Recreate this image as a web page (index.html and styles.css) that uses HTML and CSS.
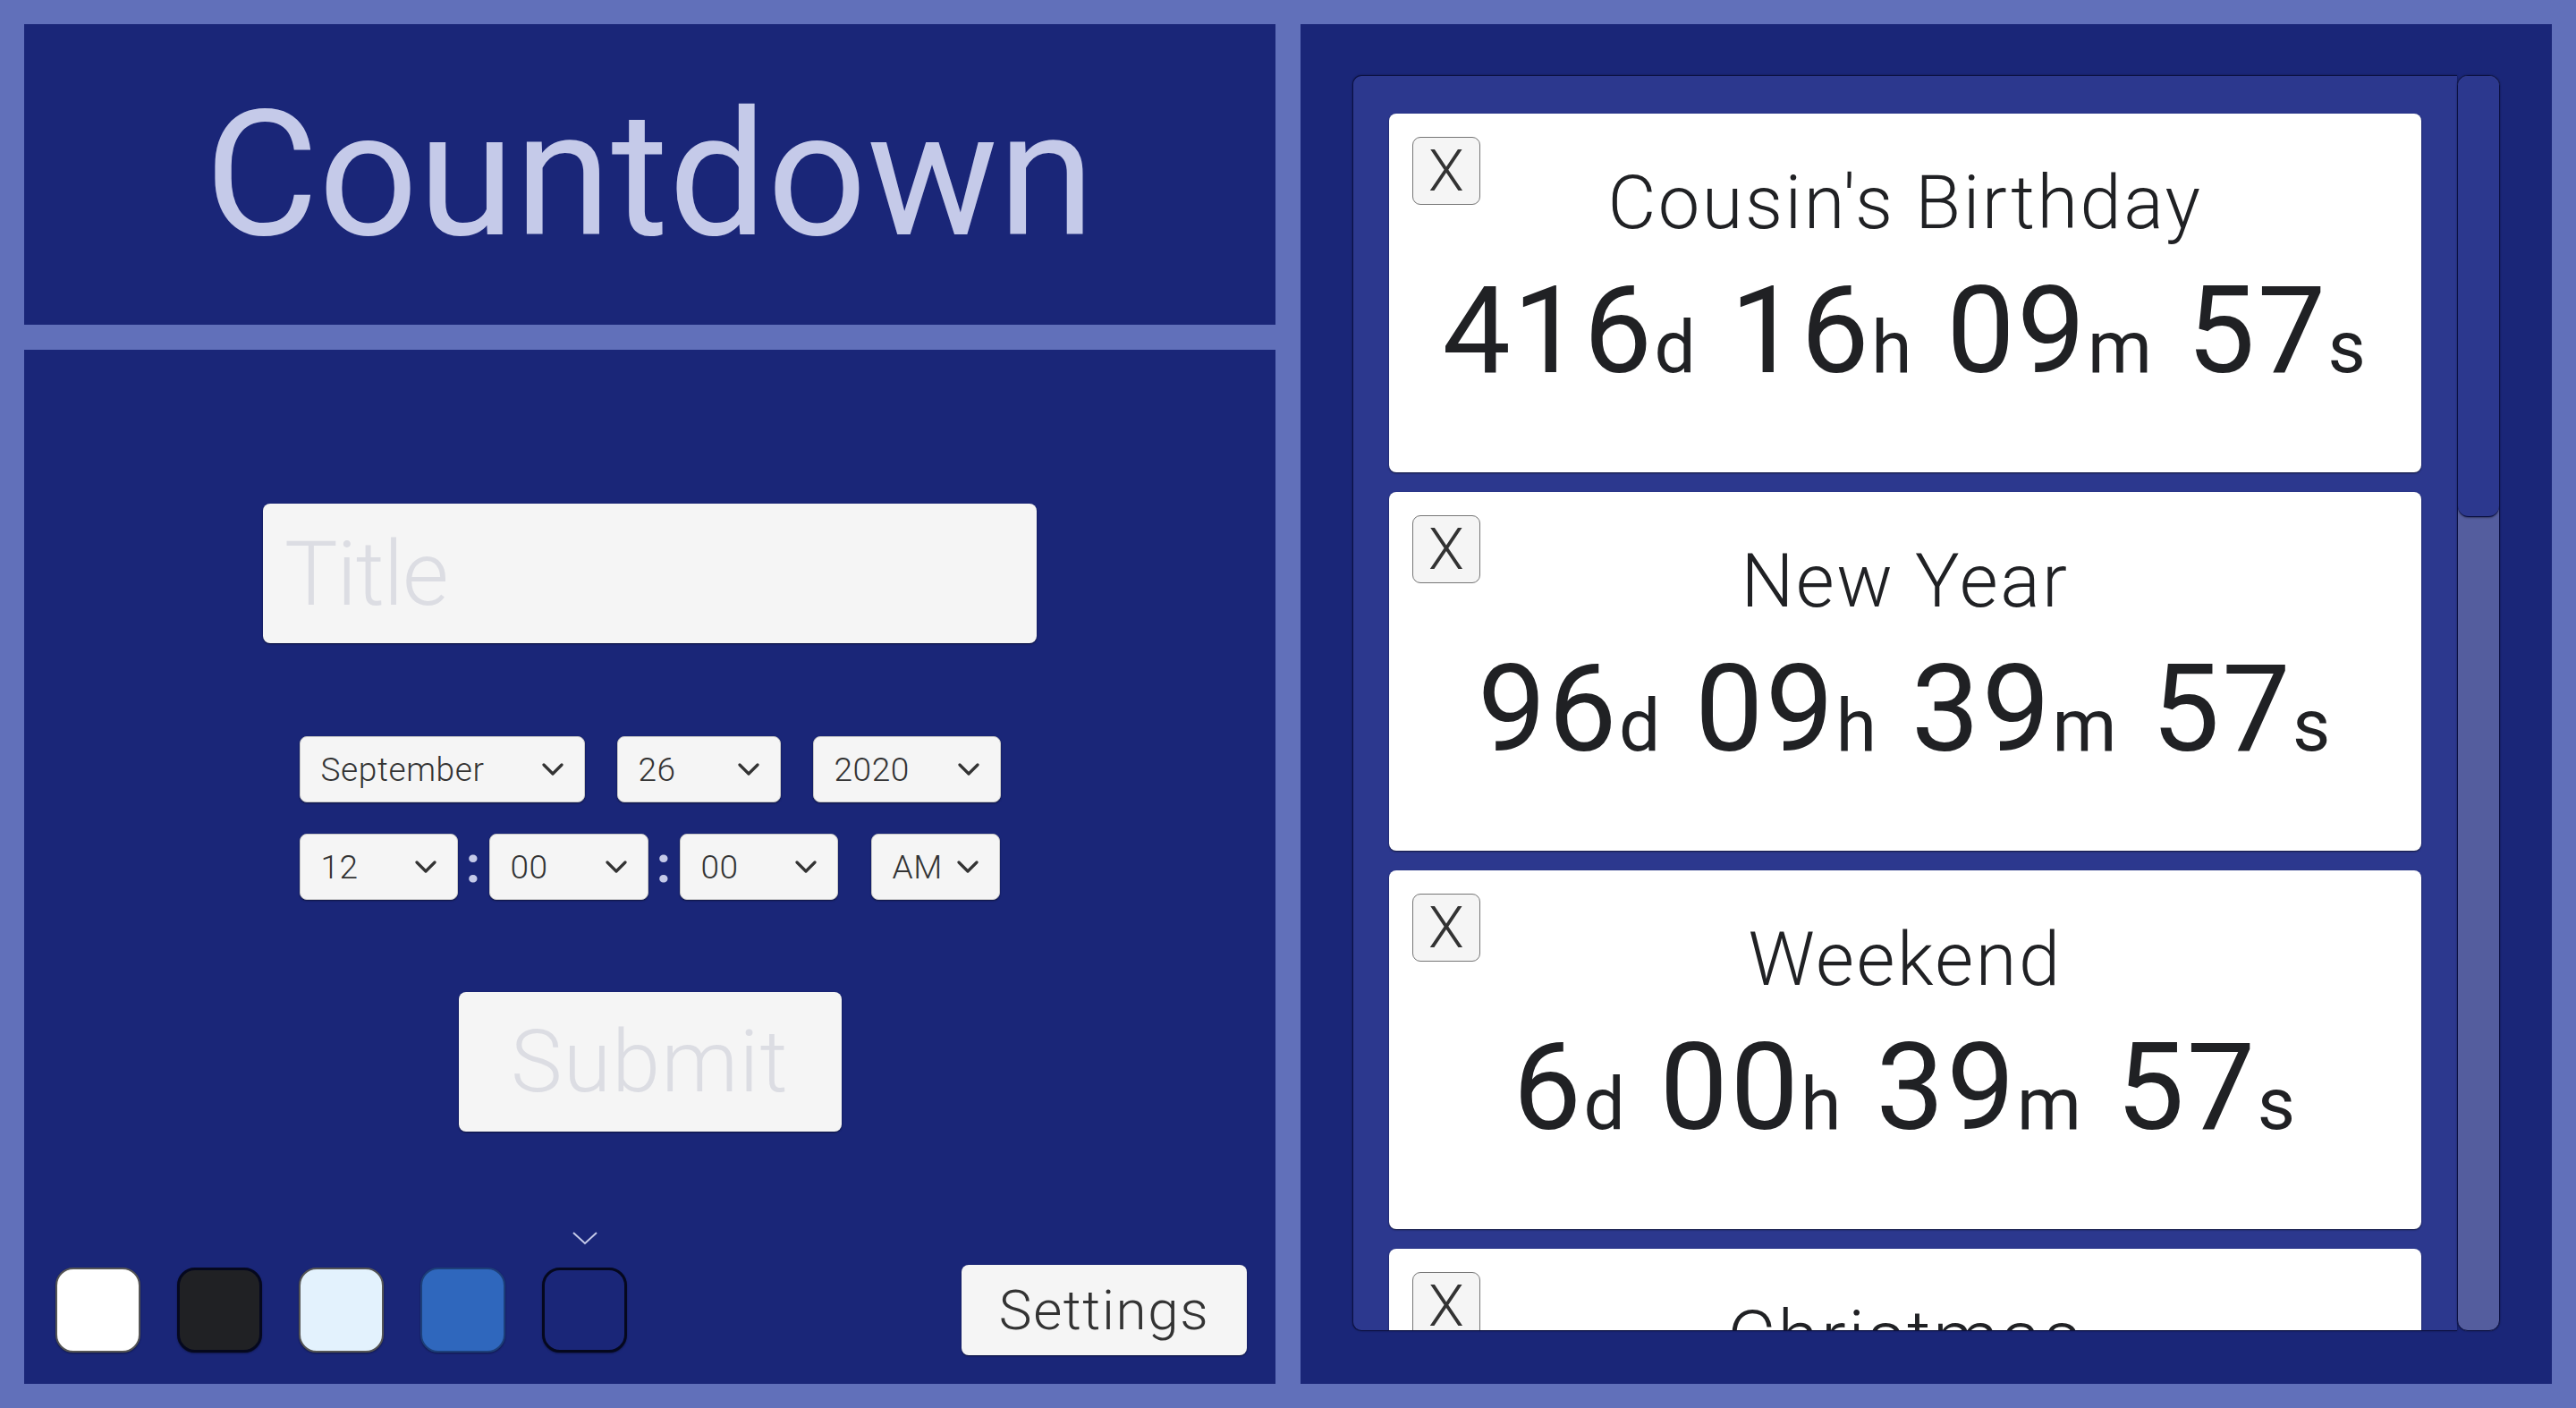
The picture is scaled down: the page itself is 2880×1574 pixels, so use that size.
FILE: index.html
```html
<!DOCTYPE html>
<html lang="en">
<head>
<meta charset="utf-8">
<title>Countdown</title>
<link rel="stylesheet" href="styles.css">
</head>
<body>
<div class="app">
  <div class="left">
    <header class="panel header">
      <h1 class="app-title">Countdown</h1>
    </header>
    <section class="panel form-panel">
      <div class="form">
        <div class="title-input"><span class="placeholder">Title</span></div>
        <div class="row row-date">
          <div class="select w-month"><span>September</span><svg class="chev" viewBox="0 0 24 15"><path d="M2 2 L12 12 L22 2"/></svg></div>
          <div class="select w-day"><span>26</span><svg class="chev" viewBox="0 0 24 15"><path d="M2 2 L12 12 L22 2"/></svg></div>
          <div class="select w-year"><span>2020</span><svg class="chev" viewBox="0 0 24 15"><path d="M2 2 L12 12 L22 2"/></svg></div>
        </div>
        <div class="row row-time">
          <div class="select w-hour"><span>12</span><svg class="chev" viewBox="0 0 24 15"><path d="M2 2 L12 12 L22 2"/></svg></div>
          <span class="colon">:</span>
          <div class="select w-min"><span>00</span><svg class="chev" viewBox="0 0 24 15"><path d="M2 2 L12 12 L22 2"/></svg></div>
          <span class="colon">:</span>
          <div class="select w-sec"><span>00</span><svg class="chev" viewBox="0 0 24 15"><path d="M2 2 L12 12 L22 2"/></svg></div>
          <div class="select w-ampm"><span>AM</span><svg class="chev" viewBox="0 0 24 15"><path d="M2 2 L12 12 L22 2"/></svg></div>
        </div>
        <div class="submit">Submit</div>
      </div>
      <div class="bottom-bar">
        <div class="swatches">
          <div class="swatch sw-white"></div>
          <div class="swatch sw-dark selected"></div>
          <div class="swatch sw-light"></div>
          <div class="swatch sw-blue"></div>
          <div class="swatch sw-navy selected">
            <svg class="indicator" viewBox="0 0 30 16"><path d="M2 2 L15 14 L28 2"/></svg>
          </div>
        </div>
        <div class="settings">Settings</div>
      </div>
    </section>
  </div>
  <section class="panel right">
    <div class="list-box">
      <div class="list">
        <div class="card">
          <div class="close">X</div>
          <div class="card-title">Cousin's Birthday</div>
          <div class="time">416<span class="u">d</span> 16<span class="u">h</span> 09<span class="u">m</span> 57<span class="u">s</span></div>
        </div>
        <div class="card">
          <div class="close">X</div>
          <div class="card-title">New Year</div>
          <div class="time">96<span class="u">d</span> 09<span class="u">h</span> 39<span class="u">m</span> 57<span class="u">s</span></div>
        </div>
        <div class="card">
          <div class="close">X</div>
          <div class="card-title">Weekend</div>
          <div class="time">6<span class="u">d</span> 00<span class="u">h</span> 39<span class="u">m</span> 57<span class="u">s</span></div>
        </div>
        <div class="card">
          <div class="close">X</div>
          <div class="card-title">Christmas</div>
          <div class="time">89<span class="u">d</span> 09<span class="u">h</span> 39<span class="u">m</span> 57<span class="u">s</span></div>
        </div>
      </div>
      <div class="scrollbar">
        <div class="thumb"></div>
      </div>
    </div>
  </section>
</div>
</body>
</html>
```
FILE: styles.css
```css
* { box-sizing: border-box; }
html, body { margin: 0; padding: 0; }
body {
  width: 2880px;
  height: 1574px;
  background: #6170ba;
  font-family: Roboto, "Liberation Sans", sans-serif;
  overflow: hidden;
}
.app {
  display: grid;
  grid-template-columns: 1399px 1399px;
  column-gap: 28px;
  padding: 27px;
  height: 1574px;
}
.left {
  display: flex;
  flex-direction: column;
  gap: 28px;
  min-height: 0;
}
.panel { background: #1a2678; }
.header {
  height: 336px;
  display: flex;
  align-items: center;
  justify-content: center;
}
.app-title {
  margin: 0;
  font-size: 195px;
  font-weight: 400;
  line-height: normal;
  color: #c5cae9;
  letter-spacing: 0.3px;
}
.form-panel {
  flex: 1;
  display: flex;
  flex-direction: column;
  min-height: 0;
}
.form {
  display: flex;
  flex-direction: column;
  align-items: center;
  padding-top: 172px;
}
.title-input {
  width: 865px;
  height: 156px;
  background: #f5f5f5;
  border-radius: 8px;
  box-shadow: 0 1px 2px rgba(0,0,0,0.5);
  display: flex;
  align-items: center;
  padding-left: 24px;
}
.placeholder {
  font-size: 100px;
  font-weight: 300;
  color: #dcdde3;
  line-height: normal;
  letter-spacing: -1.2px;
}
.row {
  display: flex;
  align-items: center;
  width: 784px;
  height: 74px;
}
.row-date { margin-top: 104px; gap: 36px; }
.row-time { margin-top: 35px; }
.select {
  height: 74px;
  background: #f5f5f5;
  border-radius: 8px;
  border: 1px solid #c8c8c8;
  box-shadow: 0 1px 2px rgba(0,0,0,0.45);
  display: flex;
  align-items: center;
  justify-content: space-between;
  padding: 0 23px 0 23px;
  font-size: 37px;
  font-weight: 300;
  color: #333;
  letter-spacing: 0.6px;
}
.chev {
  width: 24px;
  height: 15px;
  fill: none;
  stroke: #333;
  stroke-width: 3.2;
  stroke-linecap: round;
  stroke-linejoin: round;
}
.w-month { width: 319px; }
.w-day { width: 183px; }
.w-year { width: 210px; }
.w-hour { width: 177px; }
.w-min { width: 178px; }
.w-sec { width: 177px; }
.w-ampm { width: 144px; margin-left: 37px; }
.colon {
  width: 35px;
  text-align: center;
  font-size: 58px;
  font-weight: 700;
  color: #c5cae9;
  line-height: 74px;
  padding-bottom: 6px;
}
.submit {
  margin-top: 103px;
  width: 428px;
  height: 156px;
  background: #f5f5f5;
  border-radius: 8px;
  box-shadow: 0 1px 2px rgba(0,0,0,0.5);
  display: flex;
  align-items: center;
  justify-content: center;
  font-size: 97px;
  font-weight: 300;
  color: #dcdde3;
  letter-spacing: 1.2px;
}
.bottom-bar {
  margin-top: auto;
  display: flex;
  align-items: center;
  justify-content: space-between;
  padding: 0 32px 32px 35px;
}
.swatches {
  display: flex;
  gap: 41px;
  align-items: center;
}
.swatch {
  position: relative;
  width: 95px;
  height: 95px;
  border-radius: 20px;
  border: 2px solid #444;
  box-shadow: 0 1px 2px rgba(0,0,0,0.4);
}
.swatch.selected { border: 3px solid #05081e; }
.sw-white { background: #ffffff; border-color: #555; }
.sw-dark { background: #202124; }
.sw-light { background: #e3f2fd; border-color: #555; }
.sw-blue { background: #2f67bd; border-color: #1d3f7a; }
.sw-navy { background: #1a2678; }
.indicator {
  position: absolute;
  left: 50%;
  top: -44px;
  width: 30px;
  height: 16px;
  margin-left: -15px;
  fill: none;
  stroke: #c5cae9;
  stroke-width: 2;
}
.settings {
  width: 319px;
  height: 101px;
  background: #f5f5f5;
  border-radius: 8px;
  box-shadow: 0 1px 2px rgba(0,0,0,0.5);
  display: flex;
  align-items: center;
  justify-content: center;
  font-size: 62px;
  font-weight: 300;
  color: #333;
  letter-spacing: 1.6px;
}
.right {
  padding: 57px 58px 59px 58px;
  min-height: 0;
}
.list-box {
  height: 100%;
  display: flex;
}
.list {
  flex: 1;
  background: #2c388e;
  border: 1px solid #0b1040;
  border-right: none;
  border-radius: 10px 0 0 10px;
  box-shadow: 0 0 2px rgba(0,0,0,0.5);
  padding: 42px 40px 0 40px;
  overflow: hidden;
  display: flex;
  flex-direction: column;
  gap: 22px;
}
.card {
  position: relative;
  flex-shrink: 0;
  height: 401px;
  background: #ffffff;
  border-radius: 8px;
  box-shadow: 0 1px 2px rgba(0,0,0,0.6);
  color: #202124;
  text-align: center;
  padding-top: 50px;
}
.close {
  position: absolute;
  left: 26px;
  top: 26px;
  width: 76px;
  height: 76px;
  background: #f5f5f5;
  border: 1px solid #767676;
  border-radius: 9px;
  font-size: 65px;
  font-weight: 300;
  line-height: 74px;
  text-align: center;
  color: #333;
}
.card-title {
  font-size: 83px;
  font-weight: 300;
  line-height: 100px;
  letter-spacing: 2.5px;
}
.time {
  margin-top: 13px;
  font-size: 136px;
  font-weight: 400;
  line-height: 160px;
  white-space: nowrap;
  letter-spacing: 2.5px;
}
.u { font-size: 82px; }
.scrollbar {
  width: 48px;
  background: #545d9e;
  border: 1px solid #0b1040;
  border-radius: 12px;
  box-shadow: 0 0 2px rgba(0,0,0,0.5);
  display: flex;
  flex-direction: column;
  overflow: hidden;
}
.thumb {
  height: 493px;
  background: #2c388e;
  border-bottom: 1px solid #0b1040;
  border-radius: 0 0 12px 12px;
  box-shadow: 0 1px 2px rgba(0,0,0,0.4);
}
```
